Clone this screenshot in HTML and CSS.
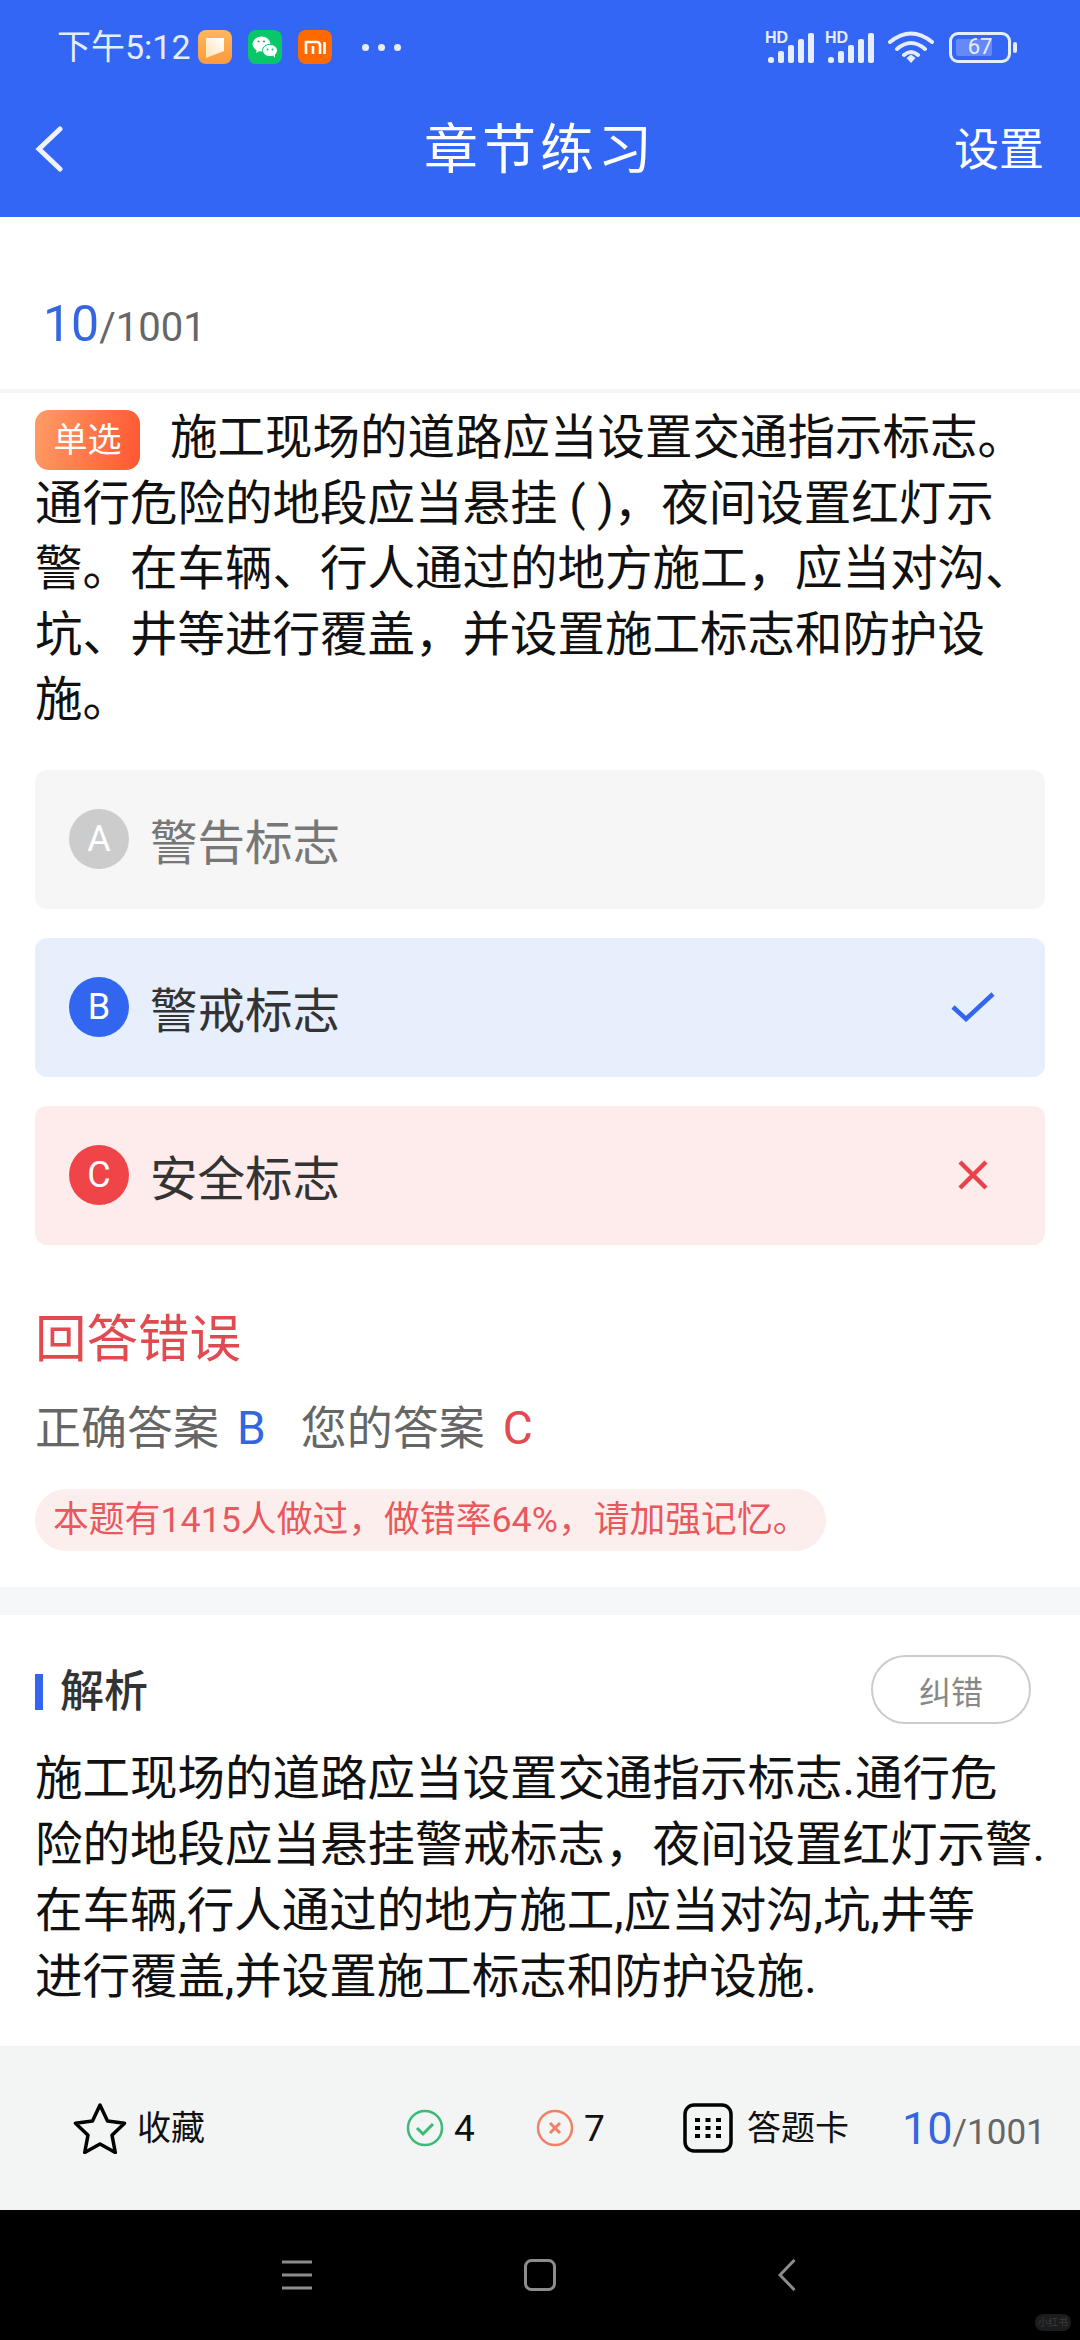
FILE: index.html
```html
<!DOCTYPE html>
<html lang="zh-CN">
<head>
    <meta charset="UTF-8">
    <meta name="viewport" content="width=device-width, initial-scale=1.0">
    <title>章节练习</title>
    <link rel="stylesheet" href="styles.css">
</head>
<body>
    <!-- Cabecera azul con barra de estado -->
    <header class="cabecera">
        <div class="estado">
            <span class="hora">下午5:12</span>
            <svg class="app app-nota" viewBox="0 0 34 34">
                <defs>
                    <linearGradient id="gradNota" x1="0" y1="0" x2="0" y2="1">
                        <stop offset="0" stop-color="#ffb65c"/>
                        <stop offset="1" stop-color="#fb9a3c"/>
                    </linearGradient>
                    <linearGradient id="gradHoja" x1="0" y1="1" x2="1" y2="0">
                        <stop offset="0" stop-color="#ffe3b5"/>
                        <stop offset="1" stop-color="#fff"/>
                    </linearGradient>
                </defs>
                <rect width="34" height="34" rx="8" fill="url(#gradNota)"/>
                <path d="M8 8h18v13L8 28z" fill="url(#gradHoja)"/>
            </svg>
            <svg class="app app-wechat" viewBox="0 0 34 34">
                <rect width="34" height="34" rx="8" fill="#07c768"/>
                <ellipse cx="13.5" cy="14" rx="9" ry="7.5" fill="#fff"/>
                <path d="M9 19l-1 4 5-3z" fill="#fff"/>
                <ellipse cx="22" cy="20.5" rx="7.5" ry="6.2" fill="#fff" stroke="#07c768"/>
                <path d="M25 25l2 3 0-5z" fill="#fff"/>
                <circle cx="10.5" cy="11.5" r="1.1" fill="#07c768"/>
                <circle cx="16" cy="11.5" r="1.1" fill="#07c768"/>
                <circle cx="19.5" cy="19.5" r="1" fill="#07c768"/>
                <circle cx="24.5" cy="19.5" r="1" fill="#07c768"/>
            </svg>
            <svg class="app app-mi" viewBox="0 0 34 34">
                <rect width="34" height="34" rx="8" fill="#ff6a00"/>
                <path d="M8 24V12h11a3 3 0 0 1 3 3v9M15 24v-8M26.500 12v12" fill="none" stroke="#fff" stroke-width="2.600"/>
            </svg>
            <span class="puntos"><i></i><i></i><i></i></span>
            <span class="estado-der">
                <span class="senal">
                    <b class="hd">HD</b>
                    <svg viewBox="0 0 50 32">
                        <rect x="3" y="26" width="6" height="6" rx="2.500"/>
                        <rect x="13" y="20" width="6" height="12" rx="2"/>
                        <rect x="23" y="14" width="6" height="18" rx="2"/>
                        <rect x="33" y="8" width="6" height="24" rx="2"/>
                        <rect x="43" y="2" width="6" height="30" rx="2"/>
                    </svg>
                </span>
                <span class="senal">
                    <b class="hd">HD</b>
                    <svg viewBox="0 0 50 32">
                        <rect x="3" y="26" width="6" height="6" rx="2.500"/>
                        <rect x="13" y="20" width="6" height="12" rx="2"/>
                        <rect x="23" y="14" width="6" height="18" rx="2"/>
                        <rect x="33" y="8" width="6" height="24" rx="2"/>
                        <rect x="43" y="2" width="6" height="30" rx="2"/>
                    </svg>
                </span>
                <svg class="wifi" viewBox="0 0 46 32">
                    <path d="M2 11Q23 -6 44 11M9 18Q23 6 37 18M16 24Q23 18 30 24" fill="none" stroke="#e6edff" stroke-width="4" stroke-linecap="round"/>
                    <path d="M18.500 27L23 23.500 27.500 27 23 32z" fill="#e6edff"/>
                </svg>
                <span class="bateria">
                    <span class="bateria-caja"><i class="bateria-nivel"></i><b>67</b></span>
                    <i class="bateria-punta"></i>
                </span>
            </span>
        </div>
        <div class="titulo-barra">
            <svg class="volver" viewBox="0 0 28 46">
                <path d="M25 3L4 23l21 20" fill="none" stroke="#eef3ff" stroke-width="5" stroke-linecap="round"/>
            </svg>
            <h1>章节练习</h1>
            <a class="ajustes">设置</a>
        </div>
    </header>

    <div class="progreso"><span class="azul">10</span><span class="total">/1001</span></div>

    <!-- Pregunta -->
    <section class="pregunta">
        <p class="enunciado"><span class="tipo">单选</span>施工现场的道路应当设置交通指示标志。通行危险的地段应当悬挂 ( )，夜间设置红灯示警。在车辆、行人通过的地方施工，应当对沟、坑、井等进行覆盖，并设置施工标志和防护设施。</p>

        <div class="opcion opcion-normal">
            <span class="letra">A</span>
            <span class="opcion-texto">警告标志</span>
        </div>
        <div class="opcion opcion-bien">
            <span class="letra">B</span>
            <span class="opcion-texto">警戒标志</span>
            <svg class="marca" viewBox="0 0 44 30">
                <path d="M2 15l13 12L42 2" fill="none" stroke="#3366ee" stroke-width="4.500"/>
            </svg>
        </div>
        <div class="opcion opcion-mal">
            <span class="letra">C</span>
            <span class="opcion-texto">安全标志</span>
            <svg class="marca marca-x" viewBox="0 0 30 30">
                <path d="M2 2l26 26M28 2L2 28" fill="none" stroke="#e8434a" stroke-width="4.500"/>
            </svg>
        </div>

        <h2 class="resultado">回答错误</h2>
        <p class="respuestas">正确答案<span class="azul">B</span><span class="tuya">您的答案<span class="rojo">C</span></span></p>
        <p class="aviso">本题有1415人做过，做错率64%，请加强记忆。</p>
    </section>

    <!-- Analisis -->
    <section class="analisis">
        <div class="analisis-cab">
            <h3>解析</h3>
            <button class="corregir">纠错</button>
        </div>
        <p class="analisis-texto">施工现场的道路应当设置交通指示标志.通行危<br>险的地段应当悬挂警戒标志，夜间设置红灯示警.<br>在车辆,行人通过的地方施工,应当对沟,坑,井等<br>进行覆盖,并设置施工标志和防护设施.</p>
    </section>

    <!-- Barra inferior -->
    <footer class="pie">
        <svg class="estrella" viewBox="0 0 54 52">
            <path d="M27 3l7.500 16 17 2.200-12.500 12 3.300 17.300L27 42l-15.300 8.500L15 33.200 2.500 21.200l17-2.200z" fill="none" stroke="#000" stroke-width="3.500" stroke-linejoin="round"/>
        </svg>
        <span class="pie-texto pie-colecta">收藏</span>
        <svg class="circulo" viewBox="0 0 38 38">
            <circle cx="19" cy="19" r="17" fill="none" stroke="#3cb878" stroke-width="2.500"/>
            <path d="M11 19l6 6 10-10" fill="none" stroke="#3cb878" stroke-width="3"/>
        </svg>
        <span class="cuenta cuenta-bien">4</span>
        <svg class="circulo" viewBox="0 0 38 38">
            <circle cx="19" cy="19" r="17" fill="none" stroke="#f08066" stroke-width="2.500"/>
            <path d="M14 14l10 10M24 14L14 24" fill="none" stroke="#f08066" stroke-width="3"/>
        </svg>
        <span class="cuenta cuenta-mal">7</span>
        <svg class="rejilla" viewBox="0 0 50 50">
            <rect x="2" y="2" width="46" height="46" rx="9" fill="none" stroke="#000" stroke-width="3.500"/>
            <g>
                <rect x="12" y="15" width="5" height="4"/><rect x="22.500" y="15" width="5" height="4"/><rect x="33" y="15" width="5" height="4"/>
                <rect x="12" y="23" width="5" height="4"/><rect x="22.500" y="23" width="5" height="4"/><rect x="33" y="23" width="5" height="4"/>
                <rect x="12" y="31" width="5" height="4"/><rect x="22.500" y="31" width="5" height="4"/><rect x="33" y="31" width="5" height="4"/>
            </g>
        </svg>
        <span class="pie-texto pie-tarjeta">答题卡</span>
        <span class="pie-progreso"><span class="azul">10</span><span class="total">/1001</span></span>
    </footer>

    <!-- Navegacion del sistema -->
    <nav class="navegacion">
        <svg class="nav-menu" viewBox="0 0 30 30">
            <path d="M0 2h30M0 15h30M0 28h30" stroke="#8c8c8c" stroke-width="3"/>
        </svg>
        <svg class="nav-casa" viewBox="0 0 32 32">
            <rect x="1.500" y="1.500" width="29" height="29" rx="6" fill="none" stroke="#8c8c8c" stroke-width="3"/>
        </svg>
        <svg class="nav-atras" viewBox="0 0 18 32">
            <path d="M16.500 1L2 16l14.500 15" fill="none" stroke="#8c8c8c" stroke-width="3"/>
        </svg>
        <span class="sello">小红书</span>
    </nav>
</body>
</html>
```

FILE: styles.css
```css
* {
    box-sizing: border-box;
}
html, body {
    margin: 0;
    padding: 0;
}
body {
    width: 1080px;
    height: 2340px;
    overflow: hidden;
    background-color: #fff;
    font-family: Roboto, "Noto Sans CJK SC", sans-serif;
    color: #111;
}
h1, h2, h3, p {
    margin: 0;
    font-weight: normal;
}
.azul {
    color: #3366e0;
}
.rojo {
    color: #e24a50;
}

/* Cabecera */
.cabecera {
    height: 217px;
    background-color: #3366f5;
    color: #fff;
}
.estado {
    display: flex;
    align-items: center;
    height: 94px;
    padding: 0 63px 0 57px;
    color: #e6edff;
}
.hora {
    font-size: 34px;
    line-height: 40px;
    width: 141px;
    white-space: nowrap;
}
.app {
    width: 34px;
    height: 34px;
    margin-right: 16px;
}
.puntos {
    display: flex;
    gap: 9px;
    margin-left: 14px;
}
.puntos i {
    width: 7px;
    height: 7px;
    border-radius: 50%;
    background-color: #e6edff;
}
.estado-der {
    display: flex;
    align-items: center;
    gap: 10px;
    margin-left: auto;
}
.senal {
    position: relative;
    display: block;
    width: 50px;
    height: 32px;
}
.senal svg {
    display: block;
    width: 50px;
    height: 32px;
    fill: #e6edff;
}
.hd {
    position: absolute;
    left: 0;
    top: -1px;
    font-family: "Liberation Sans", sans-serif;
    font-size: 16px;
    font-weight: bold;
    line-height: 16px;
}
.wifi {
    width: 46px;
    height: 32px;
    margin: 0 5px 0 3px;
}
.bateria {
    display: flex;
    align-items: center;
    gap: 2px;
}
.bateria-caja {
    position: relative;
    display: flex;
    align-items: center;
    justify-content: center;
    width: 62px;
    height: 31px;
    border: 3px solid #e6edff;
    border-radius: 9px;
}
.bateria-nivel {
    position: absolute;
    left: 4px;
    top: 4px;
    bottom: 4px;
    width: 36px;
    border-radius: 2px;
    background-color: #6689f8;
}
.bateria-caja b {
    position: relative;
    font-size: 22px;
    font-weight: normal;
    line-height: 1;
}
.bateria-punta {
    width: 4px;
    height: 11px;
    border-radius: 2px;
    background-color: #e6edff;
}
.titulo-barra {
    position: relative;
    height: 123px;
    display: flex;
    align-items: center;
    justify-content: center;
}
.titulo-barra h1 {
    font-size: 54px;
    letter-spacing: 4px;
    line-height: 70px;
    margin-top: -10px;
}
.volver {
    position: absolute;
    left: 35px;
    top: 32px;
    width: 28px;
    height: 46px;
}
.ajustes {
    position: absolute;
    right: 36px;
    top: 27px;
    font-size: 45px;
    line-height: 60px;
}

/* Progreso */
.progreso {
    height: 176px;
    padding: 72px 0 0 43px;
    border-bottom: 4px solid #f5f6f7;
    line-height: 70px;
    font-size: 50px;
}
.total {
    color: #666;
    font-size: 40px;
}

/* Pregunta */
.pregunta {
    padding: 0 35px;
    height: 1194px;
}
.enunciado {
    width: 1012px;
    padding-top: 13px;
    font-size: 47.500px;
    line-height: 65.500px;
}
.tipo {
    display: inline-block;
    vertical-align: 2px;
    width: 105px;
    height: 60px;
    margin-right: 30px;
    border-radius: 14px;
    background: linear-gradient(100deg, #ff9d66, #ff5630);
    color: #fff;
    font-size: 34px;
    line-height: 60px;
    text-align: center;
}
.opcion {
    display: flex;
    align-items: center;
    height: 139px;
    margin-bottom: 29px;
    padding: 0 34px;
    border-radius: 12px;
    font-size: 47.500px;
}
.enunciado + .opcion {
    margin-top: 36px;
}
.letra {
    width: 60px;
    height: 60px;
    margin-right: 21px;
    border-radius: 50%;
    color: #fff;
    font-size: 36px;
    line-height: 60px;
    text-align: center;
}
.opcion-normal {
    background-color: #f6f6f6;
    color: #777;
}
.opcion-normal .letra {
    background-color: #cccccc;
}
.opcion-bien {
    background-color: #e7eefc;
    color: #333;
}
.opcion-bien .letra {
    background-color: #3366f0;
}
.opcion-mal {
    background-color: #fdeceb;
    color: #333;
}
.opcion-mal .letra {
    background-color: #ef4548;
}
.marca {
    width: 44px;
    height: 30px;
    margin-left: auto;
    margin-right: 16px;
}
.marca-x {
    width: 30px;
    margin-right: 23px;
}
.resultado {
    margin-top: 60px;
    font-size: 51.500px;
    line-height: 70px;
    color: #e24a50;
}
.respuestas {
    margin-top: 21px;
    font-size: 46px;
    line-height: 64px;
    color: #666;
    white-space: nowrap;
}
.respuestas .azul,
.respuestas .rojo {
    margin-left: 18px;
}
.tuya {
    margin-left: 35px;
}
.aviso {
    display: inline-block;
    margin-top: 29px;
    padding: 0 18px;
    height: 62px;
    border-radius: 31px;
    background-color: #fdeeee;
    color: #e8585c;
    font-size: 35.800px;
    line-height: 62px;
    white-space: nowrap;
}

/* Analisis */
.analisis {
    height: 459px;
    border-top: 28px solid #f5f7f9;
    padding: 0 35px;
}
.analisis-cab {
    display: flex;
    align-items: center;
    height: 69px;
    margin-top: 40px;
}
.analisis-cab h3 {
    margin-top: 4px;
    border-left: 8px solid #3366f0;
    padding-left: 17px;
    font-size: 44px;
    font-weight: 500;
    line-height: 36px;
    color: #333;
}
.corregir {
    width: 160px;
    height: 69px;
    margin-left: auto;
    margin-right: 14px;
    border: 2px solid #ccc;
    border-radius: 35px;
    background: none;
    color: #888;
    font-family: inherit;
    font-size: 32px;
}
.analisis-texto {
    width: 1030px;
    margin-top: 22px;
    font-size: 47.500px;
    line-height: 66px;
    white-space: nowrap;
}

/* Barra inferior */
.pie {
    position: relative;
    height: 164px;
    background-color: #f3f4f4;
    display: flex;
    align-items: center;
    padding-left: 73px;
}
.estrella {
    width: 54px;
    height: 52px;
    margin-right: 10px;
}
.pie-texto {
    font-size: 34px;
    line-height: 50px;
}
.pie-colecta {
    width: 269px;
}
.circulo {
    width: 38px;
    height: 38px;
    margin-right: 10px;
}
.cuenta {
    margin-top: 2px;
    font-size: 37px;
    line-height: 50px;
}
.cuenta-bien {
    width: 82px;
}
.cuenta-mal {
    width: 99px;
}
.rejilla {
    width: 50px;
    height: 50px;
    margin-right: 14px;
}
.pie-tarjeta {
    width: 155px;
}
.pie-progreso {
    margin-top: 6px;
    font-size: 45px;
    line-height: 60px;
    white-space: nowrap;
}
.pie-progreso .total {
    font-size: 35px;
}

/* Navegacion */
.navegacion {
    position: relative;
    height: 130px;
    background-color: #000;
    display: flex;
    align-items: center;
    padding-left: 282px;
}
.nav-menu {
    width: 30px;
    height: 30px;
    margin-right: 212px;
}
.nav-casa {
    width: 32px;
    height: 32px;
    margin-right: 222px;
}
.nav-atras {
    width: 18px;
    height: 32px;
}
.sello {
    position: absolute;
    right: 9px;
    bottom: 9px;
    width: 36px;
    height: 17px;
    border-radius: 8px;
    background-color: #1c1c1c;
    color: #3a3a3a;
    font-size: 10px;
    line-height: 17px;
    text-align: center;
    white-space: nowrap;
}
```
